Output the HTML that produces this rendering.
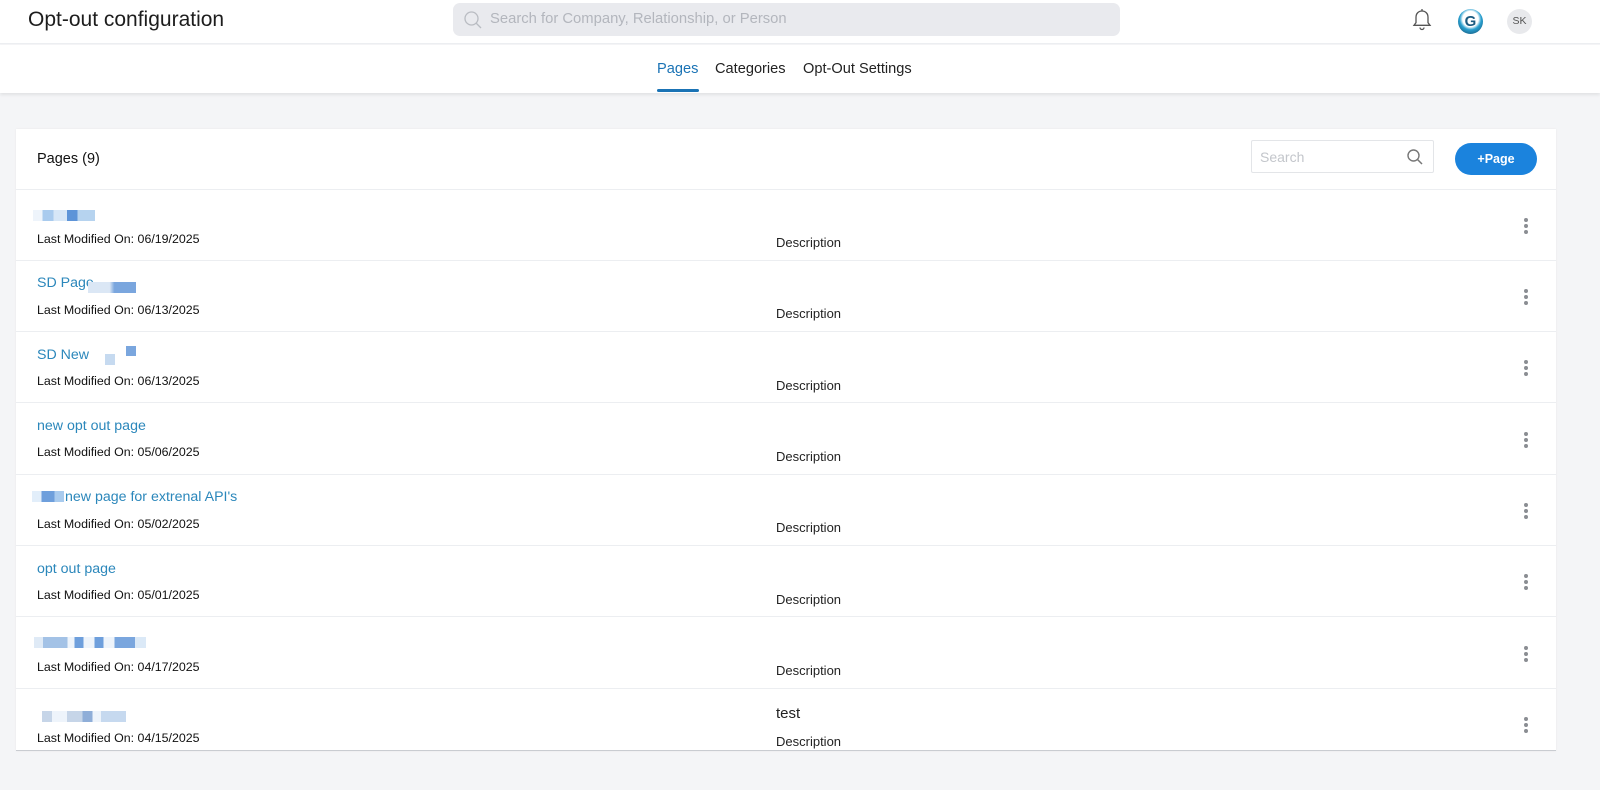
<!DOCTYPE html>
<html><head><meta charset="utf-8">
<style>
*{margin:0;padding:0;box-sizing:border-box}
body{width:1600px;height:790px;overflow:hidden;background:#f4f5f7;font-family:"Liberation Sans",sans-serif;position:relative;color:#222}
.hdr{position:absolute;left:0;top:0;width:1600px;height:44px;background:#fff;border-bottom:1px solid #eceef1}
.ttl{position:absolute;left:28px;top:8px;font-size:21px;color:#1d1d1d}
.gs{position:absolute;left:453px;top:3px;width:667px;height:33px;background:#e9eaee;border-radius:7px}
.gs span{position:absolute;left:37px;top:8px;font-size:14.8px;color:#b3b6bd}
.tabs{position:absolute;left:0;top:45px;width:1600px;height:48px;background:#fff;box-shadow:0 2px 3px rgba(0,0,0,.08)}
.tab{position:absolute;top:16px;font-size:14.6px;color:#222}
.card{position:absolute;left:16px;top:129px;width:1540px;height:622px;background:#fff;border-bottom:1px solid #c9ccd1;box-shadow:0 0 2px rgba(0,0,0,.06);overflow:hidden}
.ch{height:61px;border-bottom:1px solid #eceef1;position:relative}
.row{position:absolute;left:0;width:1540px;height:71px;border-bottom:1px solid #eceef1}
.t{position:absolute;left:21px;font-size:14.2px;color:#2b87bb}
.lm{position:absolute;left:21px;font-size:12.4px;color:#111}
.ds{position:absolute;left:760px;font-size:13px;color:#222}
.dots{position:absolute;left:1508px;width:4px}
.dots i{display:block;width:4px;height:4px;border-radius:50%;background:#8a8d92;margin-bottom:2px}
.px{position:absolute;height:11px}
</style></head><body>
<div class="hdr">
 <div class="ttl">Opt-out configuration</div>
 <div class="gs"><svg style="position:absolute;left:10px;top:7px" width="20" height="20" viewBox="0 0 20 20"><circle cx="8.5" cy="8.5" r="6.5" fill="none" stroke="#b9bcc2" stroke-width="1.3"/><line x1="13" y1="13" x2="18" y2="18" stroke="#b9bcc2" stroke-width="1.3"/></svg><span>Search for Company, Relationship, or Person</span></div>
 <svg style="position:absolute;left:1411px;top:8px" width="22" height="24" viewBox="0 0 22 24"><path d="M11 3c-3.5 0-6 2.6-6 6.2v5.5l-2 2.6h16l-2-2.6V9.2C17 5.6 14.5 3 11 3z" fill="none" stroke="#555" stroke-width="1.3"/><path d="M9 19.5a2 2 0 0 0 4 0" fill="none" stroke="#555" stroke-width="1.3"/><line x1="11" y1="1" x2="11" y2="3" stroke="#555" stroke-width="1.3"/></svg>
 <div style="position:absolute;left:1458px;top:9px;width:25px;height:25px;border-radius:50%;background:radial-gradient(circle at 50% 40%,#fff 40%,#2aa0d0 55%,#0d3d5c 100%);font-size:15px;font-weight:bold;color:#1a5a80;text-align:center;line-height:25px">G</div>
 <div style="position:absolute;left:1507px;top:9px;width:25px;height:25px;border-radius:50%;background:#e8e9ec;font-size:10.5px;color:#555;text-align:center;line-height:25px">SK</div>
</div>
<div class="tabs">
 <div class="tab" style="left:657px;color:#1a73b5">Pages</div>
 <div style="position:absolute;left:657px;top:44px;width:42px;height:3px;background:#1a73b5;border-radius:2px"></div>
 <div class="tab" style="left:715px">Categories</div>
 <div class="tab" style="left:803px">Opt-Out Settings</div>
</div>
<div class="card">
 <div class="ch">
  <div style="position:absolute;left:21px;top:22px;font-size:14.5px;color:#111">Pages (9)</div>
  <div style="position:absolute;left:1235px;top:11px;width:183px;height:33px;border:1px solid #e3e5e8;border-radius:2px"><span style="position:absolute;left:8px;top:8px;font-size:14px;color:#c3c6cb">Search</span><svg style="position:absolute;left:154px;top:7px" width="18" height="18" viewBox="0 0 18 18"><circle cx="7.5" cy="7.5" r="5.5" fill="none" stroke="#777" stroke-width="1.4"/><line x1="11.5" y1="11.5" x2="16" y2="16" stroke="#777" stroke-width="1.5"/></svg></div>
  <div style="position:absolute;left:1439px;top:14px;width:82px;height:32px;border-radius:16px;background:#1b83dd;color:#fff;font-size:12.5px;font-weight:bold;text-align:center;line-height:32px">+Page</div>
 </div>
 <div class="row" style="top:61px">
  <div class="px" style="left:17px;top:20px;width:62px;background:linear-gradient(90deg,#eef4fb 0 15%,#a9cbee 15% 33%,#d7e7f7 33% 55%,#5d94d8 55% 72%,#b6d3ef 72%)"></div>
  <div class="lm" style="top:42px">Last Modified On: 06/19/2025</div><div class="ds" style="top:45px">Description</div>
  <div class="dots" style="top:28px"><i></i><i></i><i></i></div>
 </div>
 <div class="row" style="top:132px">
  <div class="t" style="top:14px">SD Page</div>
  <div class="px" style="left:72px;top:21px;width:48px;background:linear-gradient(90deg,#dbe7f5 0 45%,#7aa6de 55%)"></div>
  <div class="lm" style="top:42px">Last Modified On: 06/13/2025</div><div class="ds" style="top:45px">Description</div>
  <div class="dots" style="top:28px"><i></i><i></i><i></i></div>
 </div>
 <div class="row" style="top:203px">
  <div class="t" style="top:15px">SD New</div>
  <div class="px" style="left:89px;top:22px;width:10px;background:#c6daf0"></div>
  <div class="px" style="left:110px;top:14px;width:10px;height:10px;background:#7aa6de"></div>
  <div class="lm" style="top:42px">Last Modified On: 06/13/2025</div><div class="ds" style="top:46px">Description</div>
  <div class="dots" style="top:28px"><i></i><i></i><i></i></div>
 </div>
 <div class="row" style="top:275px">
  <div class="t" style="top:14px">new opt out page</div>
  <div class="lm" style="top:41px">Last Modified On: 05/06/2025</div><div class="ds" style="top:45px">Description</div>
  <div class="dots" style="top:28px"><i></i><i></i><i></i></div>
 </div>
 <div class="row" style="top:346px">
  <div class="px" style="left:16px;top:16px;width:32px;background:linear-gradient(90deg,#e2eefa 0 30%,#6e9fdc 30% 70%,#a9cbee 70%)"></div>
  <div class="t" style="left:49px;top:14px">new page for extrenal API's</div>
  <div class="lm" style="top:42px">Last Modified On: 05/02/2025</div><div class="ds" style="top:45px">Description</div>
  <div class="dots" style="top:28px"><i></i><i></i><i></i></div>
 </div>
 <div class="row" style="top:417px">
  <div class="t" style="top:15px">opt out page</div>
  <div class="lm" style="top:42px">Last Modified On: 05/01/2025</div><div class="ds" style="top:46px">Description</div>
  <div class="dots" style="top:28px"><i></i><i></i><i></i></div>
 </div>
 <div class="row" style="top:489px">
  <div class="px" style="left:18px;top:19px;width:112px;background:linear-gradient(90deg,#dfeaf6 0 8%,#a3c2e6 8% 30%,#eef4fb 30% 36%,#6e9fdc 36% 44%,#eef4fb 44% 54%,#6e9fdc 54% 62%,#eef4fb 62% 72%,#7aa6de 72% 90%,#dbe9f7 90%)"></div>
  <div class="lm" style="top:42px">Last Modified On: 04/17/2025</div><div class="ds" style="top:45px">Description</div>
  <div class="dots" style="top:28px"><i></i><i></i><i></i></div>
 </div>
 <div class="row" style="top:560px;border-bottom:none">
  <div class="px" style="left:26px;top:22px;width:84px;background:linear-gradient(90deg,#c6d5e8 0 12%,#eef4fb 12% 30%,#c6d5e8 30% 48%,#8faed8 48% 60%,#eef4fb 60% 70%,#c6d9ef 70%)"></div>
  <div class="lm" style="top:42px">Last Modified On: 04/15/2025</div>
  <div style="position:absolute;left:760px;top:16px;font-size:15px;color:#222">test</div>
  <div class="ds" style="top:45px">Description</div>
  <div class="dots" style="top:28px"><i></i><i></i><i></i></div>
 </div>
</div>
</body></html>
